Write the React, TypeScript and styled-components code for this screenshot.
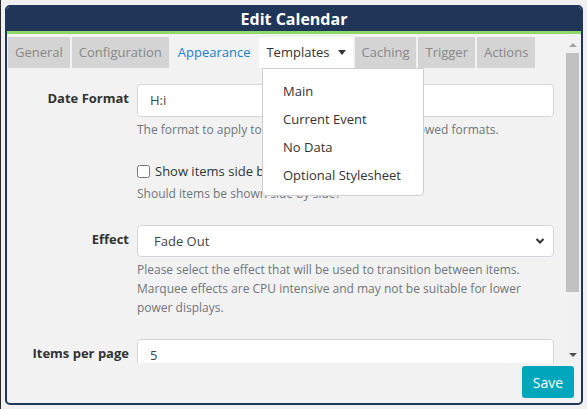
import React from "react";
import styled, { createGlobalStyle } from "styled-components";

const GlobalStyle = createGlobalStyle`
  html, body {
    margin: 0;
    padding: 0;
    background: #f0f0f0;
    font-family: "Open Sans", "Noto Sans", sans-serif;
  }
  * {
    box-sizing: border-box;
  }
`;

const Page = styled.div`
  padding: 5px 4px 4px 4px;
  border-left: 1px solid #2b2b2b;
  height: 409px;
`;

const Window = styled.div`
  width: 578px;
  height: 400px;
  border: 2px solid #1f3658;
  border-radius: 5px;
  background: #f2f2f2;
  display: flex;
  flex-direction: column;
  overflow: hidden;
`;

const TitleBar = styled.div`
  height: 27px;
  background: #1f3658;
  border-bottom: 3px solid #8cd967;
  color: #fff;
  font-weight: 700;
  font-size: 16px;
  line-height: 24px;
  text-align: center;
`;

const Body = styled.div`
  flex: 1;
  padding: 3px 1px 1px 1px;
  display: flex;
  flex-direction: column;
`;

const Viewport = styled.div`
  height: 326px;
  display: flex;
`;

const Scroller = styled.div`
  flex: 1;
  min-width: 0;
  overflow: hidden;
`;

const ScrollTrack = styled.div`
  width: 15px;
  background: #f1f1f1;
  display: flex;
  flex-direction: column;
`;

const ScrollArrow = styled.div<{ $down?: boolean }>`
  height: 16px;
  display: flex;
  align-items: center;
  justify-content: center;
  &::after {
    content: "";
    border-left: 4px solid transparent;
    border-right: 4px solid transparent;
    ${(p) =>
      p.$down ? "border-top: 4px solid #505050;" : "border-bottom: 4px solid #a3a3a3;"}
  }
`;

const ScrollThumb = styled.div`
  height: 239px;
  margin: 0 1px;
  background: #c1c1c1;
`;

const ScrollRest = styled.div`
  flex: 1;
`;

const Tabs = styled.div`
  position: relative;
  display: flex;
  gap: 2px;
  height: 31px;
`;

const Tab = styled.div<{ $variant?: "muted" | "link" | "open" }>`
  padding: 0 7px;
  font-size: 13px;
  line-height: 31px;
  white-space: nowrap;
  background: ${(p) =>
    p.$variant === "open" ? "#fff" : p.$variant === "link" ? "transparent" : "#d4d4d4"};
  color: ${(p) =>
    p.$variant === "open" ? "#333" : p.$variant === "link" ? "#1b80c4" : "#888"};
  display: flex;
  align-items: center;
`;

const Caret = styled.span`
  display: inline-block;
  margin-left: 8px;
  border-top: 5px solid #333;
  border-left: 4px solid transparent;
  border-right: 4px solid transparent;
`;

const Menu = styled.div`
  position: absolute;
  top: 31px;
  left: 254px;
  width: 162px;
  padding: 8px 0 6px;
  background: #fff;
  border: 1px solid #cfcfcf;
  border-radius: 0 0 4px 4px;
  z-index: 5;
`;

const MenuItem = styled.div`
  padding: 0 20px;
  font-size: 13px;
  line-height: 28px;
  color: #333;
  white-space: nowrap;
`;

const Form = styled.div`
  padding: 16px 11px 24px 0;
  display: flex;
  flex-direction: column;
  gap: 22px;
`;

const Group = styled.div`
  display: grid;
  grid-template-columns: 121px 1fr;
  column-gap: 8px;
`;

const Label = styled.div`
  padding-top: 5px;
  font-size: 13px;
  font-weight: 700;
  line-height: 19px;
  color: #333;
  text-align: right;
`;

const Field = styled.div`
  grid-column: 2;
  min-width: 0;
`;

const TextInput = styled.div`
  height: 33px;
  padding: 0 12px;
  background: #fff;
  border: 1px solid #d2d6da;
  border-radius: 4px;
  font-size: 13px;
  line-height: 31px;
  color: #444;
`;

const SelectBox = styled(TextInput)`
  position: relative;
  height: 32px;
  line-height: 30px;
  padding-left: 16px;
  svg {
    position: absolute;
    right: 8px;
    top: 11px;
  }
`;

const Help = styled.div`
  margin-top: 3px;
  font-size: 12px;
  line-height: 19px;
  color: #70767c;
`;

const CheckRow = styled.label`
  display: flex;
  align-items: center;
  height: 20px;
  font-size: 13px;
  color: #333;
  input {
    margin: 0 5px 0 0;
    width: 13px;
    height: 13px;
  }
`;

const Footer = styled.div`
  flex: 1;
  display: flex;
  justify-content: flex-end;
  align-items: flex-start;
  padding: 3px 6px 0 0;
`;

const SaveButton = styled.button`
  width: 52px;
  height: 32px;
  border: none;
  border-radius: 3px;
  background: #00a6bc;
  color: #fff;
  font-family: inherit;
  font-size: 14px;
`;

const tabs: { name: string; variant?: "muted" | "link" | "open" }[] = [
  { name: "General" },
  { name: "Configuration" },
  { name: "Appearance", variant: "link" },
  { name: "Templates", variant: "open" },
  { name: "Caching" },
  { name: "Trigger" },
  { name: "Actions" },
];

const templates = ["Main", "Current Event", "No Data", "Optional Stylesheet"];

export default function App() {
  return (
    <>
      <GlobalStyle />
      <Page>
        <Window>
          <TitleBar>Edit Calendar</TitleBar>
          <Body>
            <Viewport>
              <Scroller>
                <Tabs>
                  {tabs.map((t) => (
                    <Tab key={t.name} $variant={t.variant}>
                      {t.name}
                      {t.variant === "open" && <Caret />}
                    </Tab>
                  ))}
                  <Menu>
                    {templates.map((m) => (
                      <MenuItem key={m}>{m}</MenuItem>
                    ))}
                  </Menu>
                </Tabs>
                <Form>
                  <Group>
                    <Label>Date Format</Label>
                    <Field>
                      <TextInput>H:i</TextInput>
                      <Help>
                        The format to apply to dates, see PHP date() for allowed formats.
                      </Help>
                    </Field>
                  </Group>
                  <Group>
                    <Field>
                      <CheckRow>
                        <input type="checkbox" />
                        Show items side by side
                      </CheckRow>
                      <Help>Should items be shown side by side?</Help>
                    </Field>
                  </Group>
                  <Group>
                    <Label>Effect</Label>
                    <Field>
                      <SelectBox>
                        Fade Out
                        <svg width="10" height="8" viewBox="0 0 10 8">
                          <path
                            d="M1.5 2 L5 5.5 L8.5 2"
                            fill="none"
                            stroke="#333"
                            strokeWidth="2"
                          />
                        </svg>
                      </SelectBox>
                      <Help>
                        Please select the effect that will be used to transition between items.
                        Marquee effects are CPU intensive and may not be suitable for lower
                        power displays.
                      </Help>
                    </Field>
                  </Group>
                  <Group>
                    <Label>Items per page</Label>
                    <Field>
                      <TextInput>5</TextInput>
                      <Help>The number of items to show per page.</Help>
                    </Field>
                  </Group>
                </Form>
              </Scroller>
              <ScrollTrack>
                <ScrollArrow />
                <ScrollThumb />
                <ScrollRest />
                <ScrollArrow $down />
              </ScrollTrack>
            </Viewport>
            <Footer>
              <SaveButton>Save</SaveButton>
            </Footer>
          </Body>
        </Window>
      </Page>
    </>
  );
}
